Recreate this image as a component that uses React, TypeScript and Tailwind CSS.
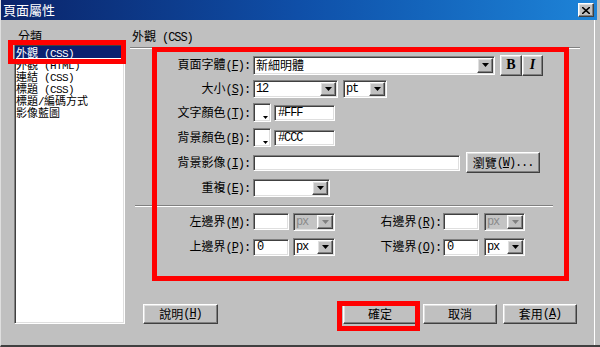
import React from "react";

const SUNKEN =
  "border border-t-[#808080] border-l-[#808080] border-b-white border-r-white shadow-[inset_1px_1px_0_#404040,inset_-1px_-1px_0_#dfdfdf]";
const RAISED =
  "border border-t-white border-l-white border-b-[#404040] border-r-[#404040] shadow-[inset_-1px_-1px_0_#808080,inset_1px_1px_0_#dfdfdf]";

const LAT = "font-['Liberation_Mono'] text-[12px] tracking-[-1.1px]";
const LATS = "font-['Liberation_Mono'] text-[11px] tracking-[-0.6px]";

function Mix({ t, small }: { t: string; small?: boolean }) {
  const parts = t.split(/([\x00-\xff]+)/).filter(Boolean);
  return (
    <>
      {parts.map((s, i) =>
        /^[\x00-\xff]+$/.test(s) ? (
          <span key={i} className={small ? LATS : LAT}>
            {s}
          </span>
        ) : (
          <span key={i}>{s}</span>
        )
      )}
    </>
  );
}

function Key({ pre, k, post = "):" }: { pre: string; k: string; post?: string }) {
  return (
    <>
      <Mix t={pre} />
      <span className={LAT}>
        (<span className="underline underline-offset-1">{k}</span>
        {post}
      </span>
    </>
  );
}

function Arrow({ gray }: { gray?: boolean }) {
  return (
    <svg width="7" height="4" viewBox="0 0 7 4">
      <path d="M0 0H7L3.5 4Z" fill={gray ? "#808080" : "#000"} />
    </svg>
  );
}

function Select({
  cls,
  value,
  disabled,
}: {
  cls: string;
  value: string;
  disabled?: boolean;
}) {
  return (
    <div
      className={`${SUNKEN} ${cls} flex ${disabled ? "bg-[#c4c4c4]" : "bg-white"}`}
    >
      <div
        className={`flex-1 flex items-center pl-[2px] ${
          disabled ? "text-[#8a8a8a]" : "text-black"
        }`}
      >
        <Mix t={value} />
      </div>
      <div
        className={`${RAISED} w-[16px] m-[1px] bg-[#c0c0c0] flex items-center justify-center`}
      >
        <Arrow gray={disabled} />
      </div>
    </div>
  );
}

function Input({ cls, value = "" }: { cls: string; value?: string }) {
  return (
    <div className={`${SUNKEN} ${cls} bg-white flex items-center pl-[3px]`}>
      <Mix t={value} />
    </div>
  );
}

function Swatch() {
  return (
    <div className={`${SUNKEN} w-[18px] h-[19px] bg-white relative`}>
      <div className="absolute right-[2px] bottom-[2px]">
        <svg width="5" height="3" viewBox="0 0 5 3">
          <path d="M0 0H5L2.5 3Z" fill="#000" />
        </svg>
      </div>
    </div>
  );
}

function Btn({ cls, children }: { cls: string; children: React.ReactNode }) {
  return (
    <div
      className={`${RAISED} ${cls} bg-[#c0c0c0] flex items-center justify-center`}
    >
      {children}
    </div>
  );
}

function Label({ children }: { children: React.ReactNode }) {
  return (
    <div className="w-[121px] pr-[1px] text-right shrink-0 whitespace-nowrap">
      {children}
    </div>
  );
}

export default function App() {
  return (
    <div
      className="relative w-[600px] h-[347px] overflow-hidden text-[12px] leading-[12px] text-black"
      style={{ fontFamily: '"Noto Sans CJK TC", "Noto Sans", sans-serif' }}
    >
      <div className="w-full h-full bg-[#c0c0c0] border-l border-l-[#dfdfdf] border-b-2 border-b-[#404040] flex flex-col">
        {/* Title bar */}
        <div className="h-[20px] mr-[3px] shrink-0 bg-gradient-to-r from-[#0a246a] via-[#0f4fa8] to-[#1e84d8] flex items-center justify-between pl-[2px] pr-[3px]">
          <span className="text-white text-[13px] leading-[14px]">頁面屬性</span>
          <div className={`${RAISED} w-[16px] h-[14px] bg-[#c0c0c0] flex items-center justify-center`}>
            <svg width="8" height="7" viewBox="0 0 8 7">
              <path d="M0 0L8 7M8 0L0 7" stroke="#000" strokeWidth="1.6" />
            </svg>
          </div>
        </div>

        {/* Body */}
        <div className="flex-1 flex pl-[13px] mr-[5px] border-r border-r-white">
          {/* Left column */}
          <div className="w-[111px] flex flex-col pt-[10px] pb-[21px]">
            <div className="pl-[4px] h-[12px] mb-[2px]">分類</div>
            <div className={`${SUNKEN} flex-1 bg-white pt-[1px] text-[11px] leading-[12px]`}>
              <div className="bg-[#0a2070] text-white pl-[1px] mr-[3px] h-[12px]">
                <Mix t="外觀 (CSS)" small />
              </div>
              <div className="pl-[1px] h-[12px]">
                <Mix t="外觀 (HTML)" small />
              </div>
              <div className="pl-[1px] h-[12px]">
                <Mix t="連結 (CSS)" small />
              </div>
              <div className="pl-[1px] h-[12px]">
                <Mix t="標題 (CSS)" small />
              </div>
              <div className="pl-[1px] h-[12px]">
                <Mix t="標題/編碼方式" small />
              </div>
              <div className="pl-[1px] h-[12px]">影像藍圖</div>
            </div>
          </div>

          {/* Right column */}
          <div className="ml-[5px] w-[450px] flex flex-col">
            <div className="h-[28px] pt-[10px] pl-[2px] border-b border-b-[#808080]">
              <Mix t="外觀 (CSS)" />
            </div>
            <div className="h-[1px] bg-white" />

            <div className="pt-[4px] flex flex-col">
              {/* Row 1 */}
              <div className="h-[24px] flex items-center">
                <Label>
                  <Key pre="頁面字體" k="F" />
                </Label>
                <Select cls="ml-[2px] w-[242px] h-[19px]" value="新細明體" />
                <Btn cls="ml-[5px] w-[22px] h-[21px]">
                  <span className="font-['Liberation_Serif'] font-bold text-[14px]">B</span>
                </Btn>
                <Btn cls="w-[21px] h-[21px]">
                  <span className="font-['Liberation_Serif'] italic font-bold text-[14px]">I</span>
                </Btn>
              </div>
              {/* Row 2 */}
              <div className="h-[23px] flex items-center">
                <Label>
                  <Key pre="大小" k="S" />
                </Label>
                <Select cls="ml-[2px] w-[85px] h-[18px]" value="12" />
                <Select cls="ml-[5px] w-[44px] h-[18px]" value="pt" />
              </div>
              {/* Row 3 */}
              <div className="h-[25px] flex items-center">
                <Label>
                  <Key pre="文字顏色" k="T" />
                </Label>
                <div className="ml-[2px]">
                  <Swatch />
                </div>
                <Input cls="ml-[3px] w-[61px] h-[16px]" value="#FFF" />
              </div>
              {/* Row 4 */}
              <div className="h-[25px] flex items-center">
                <Label>
                  <Key pre="背景顏色" k="B" />
                </Label>
                <div className="ml-[2px]">
                  <Swatch />
                </div>
                <Input cls="ml-[3px] w-[61px] h-[16px]" value="#CCC" />
              </div>
              {/* Row 5 */}
              <div className="h-[25px] flex items-center">
                <Label>
                  <Key pre="背景影像" k="I" />
                </Label>
                <Input cls="ml-[2px] w-[207px] h-[16px]" />
                <Btn cls="ml-[6px] w-[74px] h-[21px]">
                  <Key pre="瀏覽" k="W" post=")..." />
                </Btn>
              </div>
              {/* Row 6 */}
              <div className="h-[26px] flex items-center">
                <Label>
                  <Key pre="重複" k="E" />
                </Label>
                <Select cls="ml-[2px] w-[77px] h-[18px]" value="" />
              </div>
              {/* Separator */}
              <div className="h-[8px] pt-[4px] pl-[5px]">
                <div className="w-[418px] h-[1px] bg-[#808080]" />
                <div className="w-[418px] h-[1px] bg-white" />
              </div>
              {/* Row 7 */}
              <div className="h-[25px] flex items-center">
                <Label>
                  <Key pre="左邊界" k="M" />
                </Label>
                <Input cls="ml-[2px] w-[36px] h-[17px]" />
                <Select cls="ml-[4px] w-[42px] h-[18px]" value="px" disabled />
                <div className="w-[106px] text-right whitespace-nowrap">
                  <Key pre="右邊界" k="R" />
                </div>
                <Input cls="ml-[2px] w-[36px] h-[17px]" />
                <Select cls="ml-[5px] w-[41px] h-[18px]" value="px" disabled />
              </div>
              {/* Row 8 */}
              <div className="h-[26px] flex items-center">
                <Label>
                  <Key pre="上邊界" k="P" />
                </Label>
                <Input cls="ml-[2px] w-[36px] h-[17px]" value="0" />
                <Select cls="ml-[4px] w-[42px] h-[18px]" value="px" />
                <div className="w-[106px] text-right whitespace-nowrap">
                  <Key pre="下邊界" k="O" />
                </div>
                <Input cls="ml-[2px] w-[36px] h-[17px]" value="0" />
                <Select cls="ml-[5px] w-[41px] h-[18px]" value="px" />
              </div>
            </div>

            {/* Buttons */}
            <div className="mt-auto mb-[21px] flex pl-[13px] pr-[3px]">
              <Btn cls="w-[75px] h-[20px]">
                <Key pre="說明" k="H" post=")" />
              </Btn>
              <div className="ml-auto flex gap-[6px]">
                <Btn cls="w-[74px] h-[20px]">確定</Btn>
                <Btn cls="w-[74px] h-[20px]">取消</Btn>
                <Btn cls="w-[74px] h-[20px]">
                  <Key pre="套用" k="A" post=")" />
                </Btn>
              </div>
            </div>
          </div>
        </div>
      </div>

      {/* Red annotation overlays */}
      <div className="absolute left-[8px] top-[40px] w-[118px] h-[24px] border-[5px] border-[#ff0000]" />
      <div className="absolute left-[152px] top-[47px] w-[417px] h-[234px] border-[5px] border-[#ff0000]" />
      <div className="absolute left-[337px] top-[301px] w-[83px] h-[30px] border-[5px] border-[#ff0000]" />
    </div>
  );
}
